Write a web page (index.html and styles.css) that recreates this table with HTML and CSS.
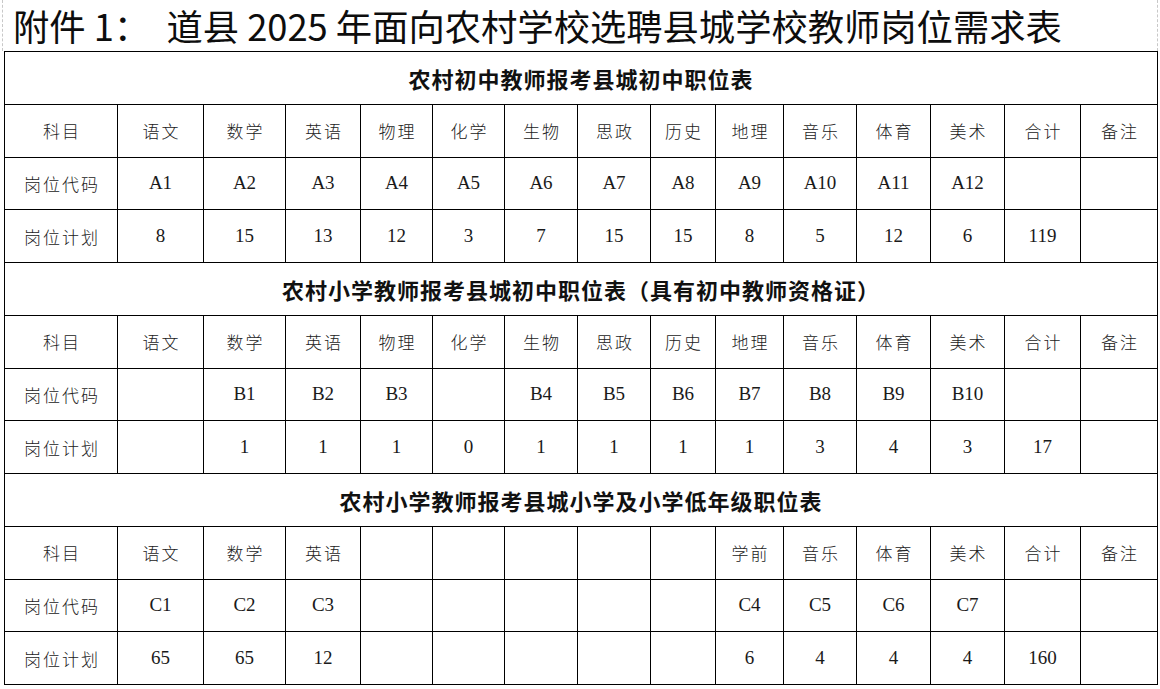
FILE: index.html
```html
<!DOCTYPE html>
<html lang="zh-CN">
<head>
<meta charset="utf-8">
<title>道县2025年面向农村学校选聘县城学校教师岗位需求表</title>
<link rel="stylesheet" href="styles.css">
</head>
<body>
<div class="page">
  <h1 class="doc-title">附件 1：&nbsp;&nbsp;道县 2025 年面向农村学校选聘县城学校教师岗位需求表</h1>
  <table class="posts">
    <colgroup>
      <col class="c-label">
      <col class="c86"><col class="c82"><col class="c75"><col class="c72"><col class="c72">
      <col class="c73"><col class="c73"><col class="c65"><col class="c68"><col class="c73">
      <col class="c74"><col class="c74"><col class="c76"><col class="c77">
    </colgroup>
    <tbody>
      <tr><th class="section" colspan="15">农村初中教师报考县城初中职位表</th></tr>
      <tr class="row">
        <td class="zh">科目</td><td class="zh">语文</td><td class="zh">数学</td><td class="zh">英语</td><td class="zh">物理</td><td class="zh">化学</td><td class="zh">生物</td><td class="zh">思政</td><td class="zh">历史</td><td class="zh">地理</td><td class="zh">音乐</td><td class="zh">体育</td><td class="zh">美术</td><td class="zh">合计</td><td class="zh">备注</td>
      </tr>
      <tr class="row">
        <td class="zh">岗位代码</td><td>A1</td><td>A2</td><td>A3</td><td>A4</td><td>A5</td><td>A6</td><td>A7</td><td>A8</td><td>A9</td><td>A10</td><td>A11</td><td>A12</td><td></td><td></td>
      </tr>
      <tr class="row">
        <td class="zh">岗位计划</td><td>8</td><td>15</td><td>13</td><td>12</td><td>3</td><td>7</td><td>15</td><td>15</td><td>8</td><td>5</td><td>12</td><td>6</td><td>119</td><td></td>
      </tr>

      <tr><th class="section" colspan="15">农村小学教师报考县城初中职位表（具有初中教师资格证）</th></tr>
      <tr class="row">
        <td class="zh">科目</td><td class="zh">语文</td><td class="zh">数学</td><td class="zh">英语</td><td class="zh">物理</td><td class="zh">化学</td><td class="zh">生物</td><td class="zh">思政</td><td class="zh">历史</td><td class="zh">地理</td><td class="zh">音乐</td><td class="zh">体育</td><td class="zh">美术</td><td class="zh">合计</td><td class="zh">备注</td>
      </tr>
      <tr class="row">
        <td class="zh">岗位代码</td><td></td><td>B1</td><td>B2</td><td>B3</td><td></td><td>B4</td><td>B5</td><td>B6</td><td>B7</td><td>B8</td><td>B9</td><td>B10</td><td></td><td></td>
      </tr>
      <tr class="row">
        <td class="zh">岗位计划</td><td></td><td>1</td><td>1</td><td>1</td><td>0</td><td>1</td><td>1</td><td>1</td><td>1</td><td>3</td><td>4</td><td>3</td><td>17</td><td></td>
      </tr>

      <tr><th class="section" colspan="15">农村小学教师报考县城小学及小学低年级职位表</th></tr>
      <tr class="row">
        <td class="zh">科目</td><td class="zh">语文</td><td class="zh">数学</td><td class="zh">英语</td><td></td><td></td><td></td><td></td><td></td><td class="zh">学前</td><td class="zh">音乐</td><td class="zh">体育</td><td class="zh">美术</td><td class="zh">合计</td><td class="zh">备注</td>
      </tr>
      <tr class="row">
        <td class="zh">岗位代码</td><td>C1</td><td>C2</td><td>C3</td><td></td><td></td><td></td><td></td><td></td><td>C4</td><td>C5</td><td>C6</td><td>C7</td><td></td><td></td>
      </tr>
      <tr class="row">
        <td class="zh">岗位计划</td><td>65</td><td>65</td><td>12</td><td></td><td></td><td></td><td></td><td></td><td>6</td><td>4</td><td>4</td><td>4</td><td>160</td><td></td>
      </tr>
    </tbody>
  </table>
</div>
</body>
</html>
```

FILE: styles.css
```css
html, body {
  margin: 0;
  padding: 0;
  background: #ffffff;
}

.page {
  width: 1160px;
  height: 689px;
  overflow: hidden;
  box-sizing: border-box;
  padding-left: 4px;
}

.doc-title {
  margin: 0 0 0 -2px;
  height: 51px;
  line-height: 50px;
  padding-left: 10px;
  font-family: "Noto Sans CJK SC", "Noto Sans", sans-serif;
  font-size: 36.3px;
  font-weight: 400;
  color: #0d0d0d;
  white-space: nowrap;
  box-sizing: border-box;
  width: 1156px;
  border-left: 1px dashed #c8c8c8;
  border-right: 1px dashed #c8c8c8;
}

.posts {
  border-collapse: collapse;
  table-layout: fixed;
  width: 1153px;
}

.c-label { width: 113px; }
.c86 { width: 86px; }
.c82 { width: 82px; }
.c75 { width: 75px; }
.c72 { width: 72px; }
.c73 { width: 73px; }
.c65 { width: 65px; }
.c68 { width: 68px; }
.c74 { width: 74px; }
.c76 { width: 76px; }
.c77 { width: 77px; }

.posts th,
.posts td {
  border: 1.5px solid #000000;
  padding: 0;
  height: 51.75px;
  text-align: center;
  vertical-align: middle;
  overflow: hidden;
  white-space: nowrap;
}

.posts td {
  font-family: "Liberation Serif", "Noto Sans CJK SC", serif;
  font-size: 19px;
  color: #1a1a1a;
}

.posts td.zh {
  font-family: "Noto Sans CJK SC", sans-serif;
  font-weight: 300;
  font-size: 17px;
  letter-spacing: 2px;
  text-indent: 2px;
  color: #222222;
}

.posts th.section {
  font-family: "Noto Sans CJK SC", sans-serif;
  font-weight: 700;
  font-size: 22px;
  color: #111111;
  letter-spacing: 1px;
}
```
